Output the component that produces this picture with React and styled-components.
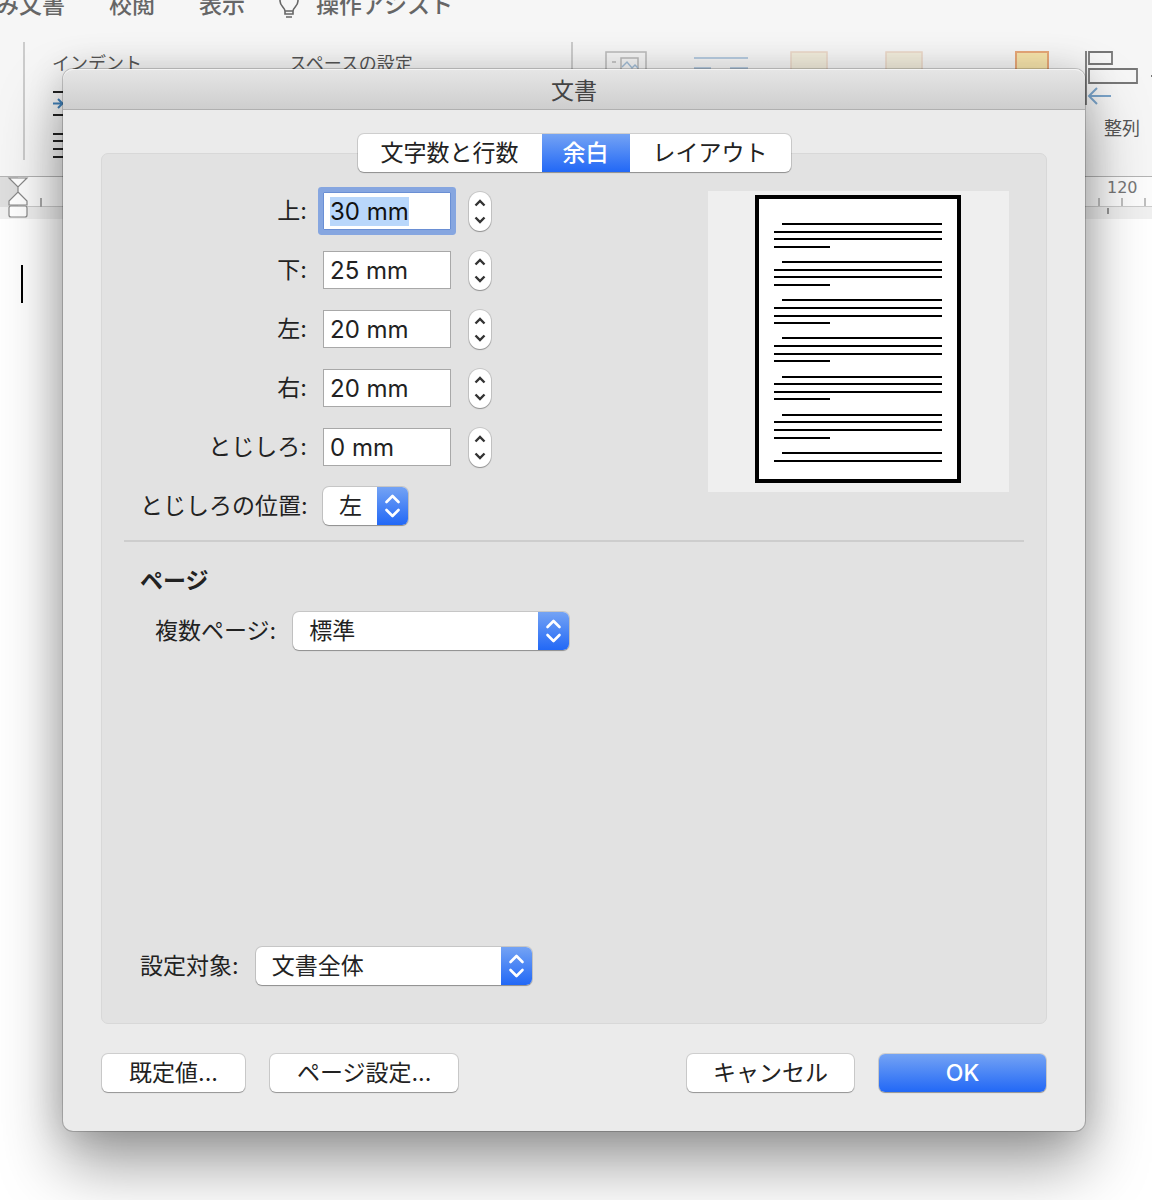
import React, { useEffect, useRef } from 'react'
import styled, { createGlobalStyle } from 'styled-components'

const margins = [
    { id: 'top', label: '上:', value: '30 mm' },
    { id: 'bottom', label: '下:', value: '25 mm' },
    { id: 'left', label: '左:', value: '20 mm' },
    { id: 'right', label: '右:', value: '20 mm' },
    { id: 'gutter', label: 'とじしろ:', value: '0 mm' },
]

const Select = ({ id, value, wide }) => (
    <SelectBox $wide={wide}>
        <SelectInput id={id} defaultValue={value}>
            <option>{value}</option>
        </SelectInput>
        <SelectCap>
            <svg width="17" height="26" viewBox="0 0 17 26" fill="none" stroke="#fff" strokeWidth="2.6" strokeLinecap="round" strokeLinejoin="round">
                <path d="M2.5 9 8.5 3l6 6M2.5 17l6 6 6-6" />
            </svg>
        </SelectCap>
    </SelectBox>
)

const Stepper = ({ label }) => (
    <StepperBox>
        <StepButton type="button" aria-label={`${label} 増やす`}>
            <svg width="12" height="8" viewBox="0 0 12 8">
                <path d="M1.5 6.5 6 2l4.5 4.5" />
            </svg>
        </StepButton>
        <StepButton type="button" aria-label={`${label} 減らす`}>
            <svg width="12" height="8" viewBox="0 0 12 8">
                <path d="M1.5 1.5 6 6l4.5-4.5" />
            </svg>
        </StepButton>
    </StepperBox>
)

const PagePreview = () => {
    const lines = []
    for (let group = 0; group < 7; group++) {
        const count = group === 6 ? 2 : 4
        for (let row = 0; row < count; row++) {
            const y = Math.round(33 + group * 38.15 + row * 7.63)
            lines.push(`M${row === 0 ? 74 : 66} ${y}H${row === 3 ? 122 : 234}`)
        }
    }
    return (
        <Preview viewBox="0 0 301 301" role="img" aria-label="プレビュー">
            <rect x="49" y="6" width="202" height="284" fill="#fff" stroke="#000" strokeWidth="4" />
            <path d={lines.join('')} stroke="#000" strokeWidth="2" />
        </Preview>
    )
}

const Background = () => (
    <>
        <Ribbon>
            <Menu>
                <MenuItem href="#mailings">み文書</MenuItem>
                <MenuItem href="#review">校閲</MenuItem>
                <MenuItem href="#view">表示</MenuItem>
                <Assist href="#assist">
                    <svg width="22" height="28" viewBox="0 0 22 28" fill="none" stroke="#666" strokeWidth="1.6">
                        <path d="M7 24v-3c0-3-5-5-5-10a9 9 0 0 1 18 0c0 5-5 7-5 10v3zM7 21h8M8 27h6" />
                    </svg>
                    操作アシスト
                </Assist>
            </Menu>
            <Tools>
                <Divider />
                <Group>
                    <GroupLabel>インデント</GroupLabel>
                    <svg width="60" height="70" viewBox="0 0 60 70" fill="none" stroke="#222" strokeWidth="2">
                        <path d="M1 3h59M1 26h59M1 45h59M1 52h59M1 60h59M1 68h59" />
                        <path d="M1 14.5h9M6 10l4.5 4.5L6 19" stroke="#4080b8" />
                    </svg>
                </Group>
                <Group $wide>
                    <GroupLabel>スペースの設定</GroupLabel>
                </Group>
                <Divider />
                <Tool $gap={32}>
                    <svg width="42" height="34" viewBox="0 0 42 34" fill="none" stroke="#bbb" strokeWidth="1.5">
                        <path d="M1 33V1h40v32M7 11h4" />
                        <path d="M16 26V7h17v19z" />
                        <path d="m17 16 5-5 5 6 3-3 3 3" stroke="#a4bfd8" />
                    </svg>
                </Tool>
                <Tool $gap={47}>
                    <svg width="54" height="34" viewBox="0 0 54 34" stroke="#b9cde2" strokeWidth="2">
                        <path d="M0 7h54M0 17h17M36 17h18" />
                    </svg>
                </Tool>
                <Tool $gap={42}>
                    <svg width="38" height="34" viewBox="0 0 38 34">
                        <rect x="1" y="1" width="36" height="32" fill="#f3eedd" stroke="#ecd8c8" strokeWidth="1.5" />
                    </svg>
                </Tool>
                <Tool $gap={57}>
                    <svg width="38" height="34" viewBox="0 0 38 34">
                        <rect x="1" y="1" width="36" height="32" fill="#f3eedd" stroke="#ecd8c8" strokeWidth="1.5" />
                    </svg>
                </Tool>
                <Tool $gap={92}>
                    <svg width="34" height="34" viewBox="0 0 34 34">
                        <rect x="1" y="1" width="32" height="32" fill="#f8e5ac" stroke="#e8a878" strokeWidth="2" />
                    </svg>
                </Tool>
                <Tool $gap={36}>
                    <svg width="74" height="56" viewBox="0 0 74 56" fill="none" stroke="#777" strokeWidth="1.8">
                        <path d="M1 0v54M4 1h23v12H4zM4 18h48v14H4zM66 25h4" />
                        <path d="M4 45h22M12 37l-8 8 8 8" stroke="#7ca6cc" strokeWidth="2" />
                    </svg>
                    整列
                </Tool>
            </Tools>
        </Ribbon>
        <Ruler>
            <svg width="62" height="42" viewBox="0 0 62 42" fill="#fff" stroke="#888" strokeWidth="1.2">
                <rect x="0" y="0" width="18" height="30" fill="#dedede" stroke="none" />
                <path d="M41 21v9" stroke="#aaa" strokeWidth="2" />
                <path d="M9 1h18l-9 9zM18 10v5M18 15l9 9v4H9v-4z" />
                <rect x="9" y="29" width="18" height="11" rx="2" />
            </svg>
            <RulerEnd>
                120
                <svg width="67" height="16" viewBox="0 0 67 16" stroke="#aaa" strokeWidth="1.5">
                    <path d="M14 0v8M37 0v8M60 0v8" />
                    <path d="M23 10v6" stroke="#777" />
                </svg>
            </RulerEnd>
        </Ruler>
        <Caret />
    </>
)

const App = () => {
    const firstField = useRef(null)

    useEffect(() => {
        firstField.current.focus()
        firstField.current.select()
    }, [])

    return (
        <Page>
            <GlobalStyle />
            <Background />
            <Overlay>
                <Dialog role="dialog" aria-labelledby="dialog-title">
                    <TitleBar id="dialog-title">文書</TitleBar>
                    <Body>
                        <Segments role="tablist">
                            <Segment type="button" role="tab">文字数と行数</Segment>
                            <Segment type="button" role="tab" aria-selected="true" $active>余白</Segment>
                            <Segment type="button" role="tab">レイアウト</Segment>
                        </Segments>
                        <Panel>
                            <MarginSection>
                                <Fields>
                                    {margins.map((field, index) => (
                                        <React.Fragment key={field.id}>
                                            <Label htmlFor={field.id}>{field.label}</Label>
                                            <FieldControls>
                                                <TextInput
                                                    id={field.id}
                                                    ref={index === 0 ? firstField : null}
                                                    defaultValue={field.value}
                                                />
                                                <Stepper label={field.label} />
                                            </FieldControls>
                                        </React.Fragment>
                                    ))}
                                    <Label htmlFor="gutter-side">とじしろの位置:</Label>
                                    <Select id="gutter-side" value="左" />
                                </Fields>
                                <PagePreview />
                            </MarginSection>
                            <Separator />
                            <SectionTitle>ページ</SectionTitle>
                            <SelectRow $indent>
                                <Label htmlFor="multi-page">複数ページ:</Label>
                                <Select id="multi-page" value="標準" wide />
                            </SelectRow>
                            <TargetRow>
                                <Label htmlFor="target">設定対象:</Label>
                                <Select id="target" value="文書全体" wide />
                            </TargetRow>
                        </Panel>
                        <Actions>
                            <ButtonPair>
                                <Button type="button">既定値...</Button>
                                <Button type="button">ページ設定...</Button>
                            </ButtonPair>
                            <ButtonPair>
                                <Button type="button" $wide>キャンセル</Button>
                                <Button type="button" $wide $primary>OK</Button>
                            </ButtonPair>
                        </Actions>
                    </Body>
                </Dialog>
            </Overlay>
        </Page>
    )
}

const blue = 'linear-gradient(#74a3f4, #2268f6)'
const controlShadow = '0 0 0 1px rgba(0, 0, 0, 0.12), 0 1px 1px rgba(0, 0, 0, 0.28)'

const GlobalStyle = createGlobalStyle`
    * {
        box-sizing: border-box;
    }

    body {
        margin: 0;
        background: #fff;
    }

    body, button, input, select {
        font-family: Inter, 'Noto Sans CJK JP', sans-serif;
        font-size: 23px;
        line-height: 30px;
        color: #222;
    }

    svg {
        display: block;
        flex-shrink: 0;
    }
`

const Page = styled.div`
    position: relative;
    min-height: 100vh;
    overflow: hidden;
`

const Ribbon = styled.div`
    background: #f6f6f6;
    border-bottom: 1px solid #b4b4b4;
`

const Menu = styled.nav`
    display: flex;
    gap: 44px;
    height: 42px;
    margin-left: -4px;
`

const MenuItem = styled.a`
    margin-top: -10px;
    color: #666;
    font-weight: 500;
    text-decoration: none;
    white-space: nowrap;
`

const Assist = styled(MenuItem)`
    display: flex;
    gap: 16px;
    margin-left: -11px;
`

const Tools = styled.div`
    display: flex;
    height: 134px;
    padding-left: 23px;
    overflow: hidden;
`

const Divider = styled.div`
    flex-shrink: 0;
    width: 2px;
    height: 118px;
    background: #ccc;
`

const Group = styled.div`
    flex-shrink: 0;
    width: ${props => (props.$wide ? '309px' : '237px')};
    padding: 9px 0 0 27px;
`

const GroupLabel = styled.div`
    margin-bottom: 12px;
    font-size: 18px;
    line-height: 26px;
    color: #555;
`

const Tool = styled.button`
    display: flex;
    flex-direction: column;
    flex-shrink: 0;
    gap: 9px;
    align-items: center;
    margin-left: ${props => props.$gap}px;
    padding: 9px 0 0;
    border: 0;
    background: none;
    font-size: 18px;
    line-height: 26px;
    color: #555;
`

const Ruler = styled.div`
    display: flex;
    justify-content: space-between;
    height: 42px;
    background: linear-gradient(#fcfcfc 29px, #ccc 29px, #ccc 30px, #f0f0f0 30px);
`

const RulerEnd = styled.div`
    width: 67px;
    padding-top: 1px;
    font-family: 'DejaVu Sans', sans-serif;
    font-size: 16px;
    line-height: 20px;
    text-indent: 22px;
    color: #777;
`

const Caret = styled.div`
    width: 2px;
    height: 38px;
    margin: 46px 0 0 21px;
    background: #000;
`

const Overlay = styled.div`
    position: absolute;
    inset: 0;
    padding: 69px 67px 0 63px;
`

const Dialog = styled.section`
    border-radius: 10px;
    background: #ebebeb;
    box-shadow:
        0 0 0 1px rgba(0, 0, 0, 0.18),
        0 2px 36px rgba(0, 0, 0, 0.16),
        0 34px 64px rgba(0, 0, 0, 0.38);
`

const TitleBar = styled.header`
    padding: 7px 0 3px;
    border-bottom: 1px solid #b0b0b0;
    border-radius: 10px 10px 0 0;
    background: linear-gradient(#e6e6e6, #cecece);
    box-shadow: inset 0 1px #f4f4f4;
    text-align: center;
    color: #444;
`

const Body = styled.div`
    padding: 24px 38px 39px;
`

const Segments = styled.div`
    position: relative;
    display: flex;
    width: max-content;
    height: 38px;
    margin: 0 auto;
    border-radius: 6px;
    background: #fff;
    box-shadow: ${controlShadow};
`

const Segment = styled.button`
    padding: 0 ${props => (props.$active ? '21px' : '23px')};
    border: 0;
    border-radius: ${props => (props.$active ? '0' : '6px')};
    background: ${props => (props.$active ? blue : 'none')};
    color: ${props => (props.$active ? '#fff' : '#222')};
    font-weight: ${props => (props.$active ? '500' : '400')};
`

const Panel = styled.div`
    display: flex;
    flex-direction: column;
    min-height: 871px;
    margin-top: -19px;
    padding-bottom: 38px;
    border: 1px solid #d8d8d8;
    border-radius: 7px;
    background: #e2e2e2;
`

const MarginSection = styled.div`
    display: flex;
    justify-content: space-between;
    padding: 37px 37px 0 38px;
`

const Fields = styled.div`
    display: grid;
    grid-template-columns: 167px auto;
    gap: 21px 16px;
    align-items: center;
    align-content: start;
    padding-top: 1px;
`

const Label = styled.label`
    text-align: right;
    white-space: nowrap;
`

const FieldControls = styled.div`
    display: flex;
    gap: 18px;
    height: 38px;
`

const TextInput = styled.input`
    width: 128px;
    height: 38px;
    padding: 0 6px;
    border: 1px solid #a8a8a8;
    border-radius: 0;
    background: #fff;
    outline: none;
    font-size: 24px;

    &:focus {
        border-color: #6a8fd4;
        border-radius: 1px;
        box-shadow: 0 0 0 5px #86a6e0;
    }

    &::selection {
        background: #b9d7fb;
        color: #111;
    }
`

const StepperBox = styled.div`
    display: flex;
    flex-direction: column;
    width: 22px;
    height: 39px;
    padding: 3px 0;
    border-radius: 11px;
    background: #fff;
    box-shadow: ${controlShadow};
`

const StepButton = styled.button`
    display: flex;
    flex: 1;
    align-items: center;
    justify-content: center;
    padding: 0;
    border: 0;
    background: none;

    path {
        fill: none;
        stroke: #333;
        stroke-width: 2.4;
    }
`

const SelectBox = styled.div`
    position: relative;
    width: ${props => (props.$wide ? '276px' : '85px')};
    height: 38px;
    border-radius: 6px;
    background: #fff;
    box-shadow: ${controlShadow};
`

const SelectInput = styled.select`
    width: 100%;
    height: 38px;
    padding: 0 31px 0 16px;
    border: 0;
    border-radius: 6px;
    background: none;
    appearance: none;
`

const SelectCap = styled.span`
    position: absolute;
    top: 0;
    right: 0;
    display: flex;
    align-items: center;
    justify-content: center;
    width: 31px;
    height: 38px;
    border-radius: 0 6px 6px 0;
    background: ${blue};
    pointer-events: none;
`

const Preview = styled.svg`
    width: 301px;
    height: 301px;
    background: #efefef;
`

const Separator = styled.hr`
    width: calc(100% - 44px);
    margin: 15px auto 0;
    border: 0;
    border-top: 2px solid #cdcdcd;
`

const SectionTitle = styled.h2`
    margin: 24px 38px 16px;
    font-size: 23px;
    line-height: 30px;
    font-weight: 700;
`

const SelectRow = styled.div`
    display: flex;
    gap: 17px;
    align-items: center;
    padding-left: ${props => (props.$indent ? '53px' : '38px')};
`

const TargetRow = styled(SelectRow)`
    margin-top: auto;
`

const Actions = styled.footer`
    display: flex;
    justify-content: space-between;
    padding: 30px 1px 0;
`

const ButtonPair = styled.div`
    display: flex;
    gap: 25px;
`

const Button = styled.button`
    width: ${props => (props.$wide ? '167px' : 'auto')};
    height: 38px;
    padding: 0 ${props => (props.$wide ? '16px' : '27px')};
    border: 0;
    border-radius: 6px;
    background: ${props => (props.$primary ? blue : '#fff')};
    box-shadow: ${controlShadow};
    color: ${props => (props.$primary ? '#fff' : '#222')};
    font-weight: ${props => (props.$primary ? '500' : '400')};
`

export default App
